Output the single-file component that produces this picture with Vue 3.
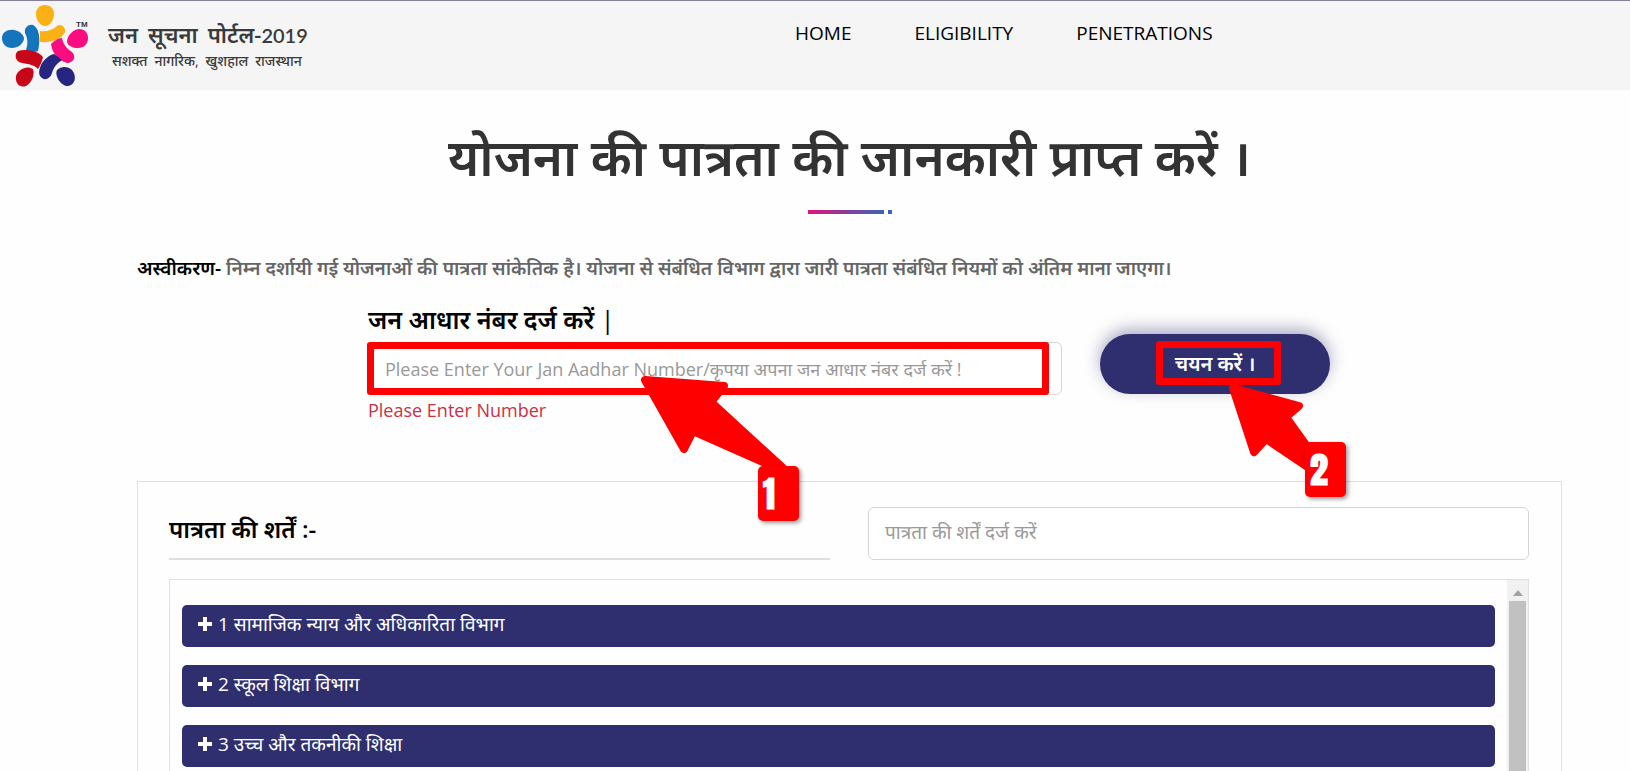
<script setup>
import { ref } from 'vue'

const navLinks = ['HOME', 'ELIGIBILITY', 'PENETRATIONS']
const departments = [
  'सामाजिक न्याय और अधिकारिता विभाग',
  'स्कूल शिक्षा विभाग',
  'उच्च और तकनीकी शिक्षा',
]
const number = ref('')
const filter = ref('')
</script>

<template>
  <div class="page">
    <header class="topbar">
      <a class="brand" href="#">
        <svg class="logo" viewBox="0 0 90 90" aria-hidden="true">
          <path d="M40 31C46 32 53 30 57 26C61 23 66 27 65 32C62 39 51 43 40 42Z" fill="#fbb116" />
          <path d="M25 33C24 27 29 24 33 25C39 28 41 38 38 51C33 53 29 51 26 50C28 44 28 39 25 33Z" fill="#1474bc" />
          <path d="M51 44C54 41 58 38 62 38C63 44 67 49 72 52C77 57 73 63 67 63C58 60 52 53 51 44Z" fill="#fb0c7f" />
          <path d="M18 51C25 49 37 50 43 57C42 62 40 66 38 69C33 64 27 64 22 63C15 62 14 54 18 51Z" fill="#c8061a" />
          <path d="M42 63C45 59 49 55 54 54C57 56 61 59 62 60C58 63 54 66 52 73C50 80 43 81 40 76C38 72 40 67 42 63Z" fill="#262580" />
          <path d="M45 5C51 5 54 9 54 14C54 20 50 26 45 26C40 26 36 20 36 14C36 9 39 5 45 5Z" fill="#fbb116" />
          <path d="M2 38C2 32 8 29 14 30C20 31 24 35 24 39C23 44 18 48 12 48C6 48 2 44 2 38Z" fill="#1474bc" />
          <path d="M67 42C67 36 72 30 79 29C85 29 88 33 88 38C88 44 84 48 78 48C73 48 68 46 67 42Z" fill="#fb0c7f" />
          <path d="M16 76C18 69 27 65 33 69C35 74 32 83 26 86C20 88 15 84 16 76Z" fill="#c8061a" />
          <path d="M57 70C61 66 68 66 72 70C76 75 76 82 71 85C66 88 61 84 58 79C56 75 56 72 57 70Z" fill="#262580" />
          <text x="76" y="27" class="tm">TM</text>
        </svg>
        <span class="brand-text">
          <span class="brand-name"><span>जन</span> <span>सूचना</span> <span>पोर्टल-<span class="year">2019</span></span></span>
          <span class="brand-tag"><span>सशक्त</span> <span>नागरिक,</span> <span>खुशहाल</span> <span>राजस्थान</span></span>
        </span>
      </a>
      <nav class="nav">
        <a v-for="link in navLinks" :key="link" href="#">{{ link }}</a>
      </nav>
    </header>

    <main class="content">
      <h1>योजना की पात्रता की जानकारी प्राप्त करें ।</h1>
      <div class="rule"></div>
      <p class="note"><b>अस्वीकरण-</b> निम्न दर्शायी गई योजनाओं की पात्रता सांकेतिक है। योजना से संबंधित विभाग द्वारा जारी पात्रता संबंधित नियमों को अंतिम माना जाएगा।</p>

      <form class="lookup" @submit.prevent>
        <div class="field">
          <label for="aadhar">जन आधार नंबर दर्ज करें <span class="bar">|</span></label>
          <div class="anchor">
            <input id="aadhar" v-model="number" class="box" type="text" placeholder="Please Enter Your Jan Aadhar Number/कृपया अपना जन आधार नंबर दर्ज करें !">
            <div class="frame frame-input"></div>
            <svg class="arrow arrow-one" width="160" height="110" viewBox="0 0 160 110" aria-hidden="true">
              <path d="M8 10L87 16L74 32L146 98L126 92L56 61L47 79Z" />
            </svg>
            <span class="badge badge-one">1</span>
          </div>
          <p class="error">Please Enter Number</p>
        </div>
        <div class="action">
          <button class="submit" type="submit">चयन करें ।</button>
          <div class="frame frame-button"></div>
          <svg class="arrow arrow-two" width="110" height="110" viewBox="0 0 110 110" aria-hidden="true">
            <path d="M12 7L78 25L65 36L88 68L88 87L45 58L33 71Z" />
          </svg>
          <span class="badge badge-two">2</span>
        </div>
      </form>

      <section class="panel">
        <div class="panel-head">
          <h2><label for="filter">पात्रता की शर्तें :-</label></h2>
          <input id="filter" v-model="filter" class="box" type="text" placeholder="पात्रता की शर्तें दर्ज करें">
        </div>
        <div class="list">
          <div class="items">
            <button v-for="(name, i) in departments" :key="name" class="item" type="button">
              <svg width="16" height="16" viewBox="0 0 16 16" aria-hidden="true"><path d="M6 1h4v5h5v4h-5v5H6v-5H1V6h5z" /></svg>
              <span>{{ i + 1 }} {{ name }}</span>
            </button>
          </div>
          <div class="scrollbar" aria-hidden="true">
            <svg width="10" height="6" viewBox="0 0 10 6"><path d="M0 6L5 0L10 6Z" /></svg>
            <div class="thumb"></div>
          </div>
        </div>
      </section>
    </main>
  </div>
</template>

<style>
body { margin: 0; background: #fefefe; }
</style>

<style scoped>
* { box-sizing: border-box; }
.page {
  height: 100vh;
  overflow: hidden;
  display: flex;
  flex-direction: column;
  background: #fefefe;
  color: #000;
  font-family: "Open Sans", "Noto Sans Devanagari", "Noto Sans", sans-serif;
  font-size: 18px;
  line-height: 24px;
}
.topbar {
  flex: none;
  display: grid;
  grid-template-columns: 795fr 835fr;
  height: 90px;
  border-top: 1px solid #85809a;
  background: #f5f5f5;
}
.brand { display: flex; gap: 18px; color: #3a3a3a; text-decoration: none; }
.logo { width: 90px; height: 90px; flex: none; margin-top: -1px; }
.tm { font: 700 8px "Liberation Sans", sans-serif; fill: #333; }
.brand-text { display: flex; flex-direction: column; padding-top: 20px; white-space: nowrap; }
.brand-name { display: flex; gap: 10px; font-size: 22px; line-height: 26px; font-weight: 600; }
.year { font-family: Lato, sans-serif; font-size: 20px; }
.brand-tag { display: flex; gap: 7px; padding-left: 4px; font-size: 14px; line-height: 26px; font-weight: 500; }
.nav { display: flex; gap: 63px; padding-top: 20px; }
.nav a { color: #000; text-decoration: none; font-size: 19px; font-weight: 500; }
.content { flex: 1; display: flex; flex-direction: column; padding: 0 68px 0 137px; }
h1 { margin: 26px 0 0; font-size: 51px; line-height: 80px; font-weight: 600; color: #333; text-align: center; }
.rule {
  width: 84px;
  height: 4px;
  margin: 14px auto 0;
  background: linear-gradient(90deg, transparent 76px, #fefefe 76px, #fefefe 80px, transparent 80px), linear-gradient(90deg, #e0147f, #3867b4 76px);
}
.note { margin: 42px 0 0; font-size: 19px; font-weight: 600; color: #666; white-space: nowrap; }
.note b { font-weight: 600; color: #000; }
.lookup { display: grid; grid-template-columns: 694fr 230fr; column-gap: 38px; padding: 0 232px 0 231px; margin-top: 24px; }
.field label { display: block; font-size: 25px; line-height: 30px; font-weight: 600; }
.bar { font-weight: 400; }
.anchor { position: relative; margin-top: 8px; }
.box {
  display: block;
  width: 100%;
  height: 53px;
  padding: 0 16px;
  border: 1px solid #d6d6d6;
  border-radius: 6px;
  background: #fff;
  font: inherit;
}
.box::placeholder { color: #999; opacity: 1; }
.error { margin: 3px 0 0; color: #cb3044; }
.action { position: relative; align-self: start; margin-top: 30px; }
.submit {
  width: 100%;
  height: 60px;
  border: 0;
  border-radius: 30px;
  background: #2f2f70;
  box-shadow: 0 -5px 16px rgba(47, 47, 112, 0.4);
  color: #fff;
  font: inherit;
  font-size: 20px;
  font-weight: 600;
}
.frame { position: absolute; border: 7px solid #fe0000; border-radius: 3px; pointer-events: none; }
.frame-input { inset: 0 13px 0 -1px; }
.frame-button { left: 56px; right: 49px; top: 7px; height: 44px; }
.arrow { position: absolute; z-index: 1; fill: #fe0000; stroke: #fe0000; stroke-width: 8px; stroke-linejoin: round; }
.arrow-one { left: 269px; top: 28px; }
.arrow-two { left: 121px; top: 47px; }
.badge {
  position: absolute;
  z-index: 2;
  width: 41px;
  height: 55px;
  padding-left: 5px;
  border-radius: 5px;
  background: #fe0000;
  box-shadow: 2px 2px 4px rgba(0, 0, 0, 0.4);
  color: #fff;
  font: 900 36px/57px Impact, Anton, Roboto, sans-serif;
}
.badge-one { left: 390px; top: 124px; }
.badge-two { left: 205px; top: 108px; }
.panel { flex: 1; display: flex; flex-direction: column; margin-top: 59px; padding: 25px 32px 0 31px; border: 1px solid #dfdfdf; border-bottom: 0; }
.panel-head { display: grid; grid-template-columns: 1fr 1fr; column-gap: 38px; }
.panel-head .box { font-size: 19px; padding-bottom: 4px; }
h2 { margin: 0; padding-top: 6px; border-bottom: 2px solid #dfdfdf; font-size: 24px; line-height: 32px; font-weight: 600; }
.list { flex: 1; display: flex; margin-top: 19px; border: 1px solid #dfdfdf; border-bottom: 0; }
.items { flex: 1; display: flex; flex-direction: column; gap: 18px; padding: 25px 12px 0; }
.item {
  display: flex;
  align-items: center;
  gap: 5px;
  height: 42px;
  padding: 0 15px 4px;
  border: 0;
  border-radius: 5px;
  background: #2f2f70;
  color: #fff;
  font: inherit;
  font-size: 19px;
}
.item svg { fill: #fff; }
.scrollbar { display: flex; flex-direction: column; align-items: center; width: 21px; padding-top: 10px; background: #f1f1f1; }
.scrollbar svg { flex: none; fill: #a3a3a3; }
.thumb { flex: 1; width: 17px; margin-top: 5px; background: #c1c1c1; }
</style>
